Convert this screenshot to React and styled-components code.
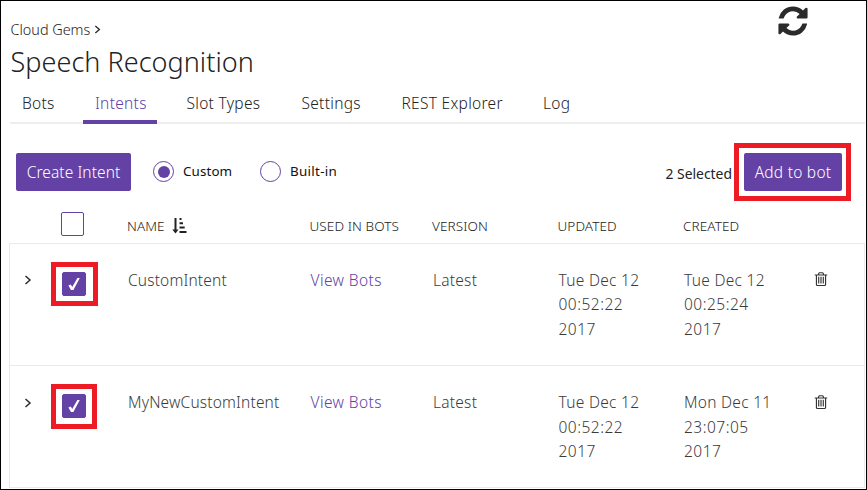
import React from 'react';
import styled, { createGlobalStyle } from 'styled-components';

const PURPLE = '#6441a5';
const RED = '#ed1c24';
const LINE = '#eaeaea';

const Global = createGlobalStyle`
  * { box-sizing: border-box; }
  body { margin: 0; background: #fff; overflow: hidden; }
  button { font: inherit; margin: 0; padding: 0; border: 0; }
  svg { display: block; }
`;

const Page = styled.div`
  display: flex;
  flex-direction: column;
  width: 867px;
  height: 490px;
  padding-left: 8px;
  border: 1px solid #000;
  background: #fff;
  overflow: hidden;
  font-family: 'Noto Sans', 'Open Sans', sans-serif;
  font-weight: 350;
  font-size: 15.5px;
  color: #222;
  white-space: nowrap;
`;

const Header = styled.header`
  display: flex;
  justify-content: space-between;
  height: 83px;
  padding: 0 56.5px 0 1.5px;
`;

const Headings = styled.div`
  padding-top: 19px;
`;

const Breadcrumb = styled.div`
  display: flex;
  align-items: center;
  gap: 4px;
  height: 19px;
  font-size: 14.4px;
`;

const Title = styled.h1`
  margin: 5.5px 0 0;
  font-size: 27px;
  line-height: 34px;
  font-weight: 300;
  letter-spacing: 0.04px;
`;

const RefreshIcon = styled.svg`
  width: 34px;
  height: 34px;
  margin-top: 3px;
  fill: #2b2b2b;
`;

const Tabs = styled.nav`
  display: grid;
  grid-template-columns: 73px 91.5px 115px 100px 141.5px 1fr;
  height: 40px;
  margin: 0 1px 0 1px;
  border-bottom: 2px solid #eee;
`;

const Tab = styled.a`
  justify-self: start;
  height: 40px;
  padding: 0 10.3px 0 12px;
  line-height: 38px;
  letter-spacing: 0.3px;
  color: ${(p) => (p.$active ? PURPLE : '#222')};
  border-bottom: 4px solid ${(p) => (p.$active ? PURPLE : 'transparent')};
`;

const Toolbar = styled.div`
  display: flex;
  align-items: center;
  height: 58px;
  margin-top: 19px;
  padding: 0 15px 0 7px;
`;

const Button = styled.button`
  display: block;
  width: ${(p) => p.$width}px;
  height: 38px;
  padding-top: 1px;
  border-radius: 2px;
  background: ${PURPLE};
  color: #fff;
  letter-spacing: ${(p) => p.$spacing}px;
  line-height: 37px;
`;

const Radio = styled.label`
  display: flex;
  align-items: center;
  gap: 9px;
  width: 107px;
  height: 21px;
  margin-bottom: 1px;
  font-size: 13.4px;
  font-weight: 450;
  line-height: 19px;
  letter-spacing: ${(p) => p.$spacing}px;
  color: #111;
`;

const RadioGroup = styled.div`
  display: flex;
  margin-left: 22px;
`;

const RadioMark = styled.span`
  display: grid;
  place-items: center;
  width: 21px;
  height: 21px;
  border: 1px solid ${PURPLE};
  border-radius: 50%;
  &::after {
    content: '';
    width: 12px;
    height: 12px;
    border-radius: 50%;
    background: ${(p) => (p.$on ? PURPLE : 'transparent')};
  }
`;

const Selected = styled.span`
  margin: 2px 2px 0 auto;
  font-size: 13.9px;
  line-height: 19px;
  font-weight: 400;
`;

const Highlight = styled.div`
  padding: 5px 4px 5px 5px;
  border: 5px solid ${RED};
`;

const columns = '41px 77px 182.5px 122.5px 125.5px 125.5px 127px 1fr';

const HeadRow = styled.div`
  display: grid;
  grid-template-columns: ${columns};
  height: 42px;
  padding-top: 11px;
  font-size: 13.5px;
  line-height: 28px;
  letter-spacing: 0.1px;
`;

const HeadCell = styled.div`
  display: flex;
  align-items: flex-start;
  gap: 7px;
`;

const SortIcon = styled.svg`
  width: 15px;
  height: 16px;
  margin-top: 6px;
  fill: #222;
`;

const Checkbox = styled.span`
  display: grid;
  place-items: center;
  width: ${(p) => (p.$checked ? 24 : 23)}px;
  height: 24px;
  margin-left: 11px;
  border: 1px solid ${PURPLE};
  border-radius: 2px;
  background: ${(p) => (p.$checked ? PURPLE : '#fff')};
`;

const Panel = styled.div`
  width: 856px;
  border: 1px solid ${LINE};
`;

const Row = styled.div`
  display: grid;
  grid-template-columns: ${columns};
  height: ${(p) => p.$height}px;
  padding-top: ${(p) => p.$top}px;
  color: #3a3a3a;
  line-height: ${(p) => p.$pitch}px;
  & + & {
    border-top: 1px solid ${LINE};
  }
`;

const Cell = styled.div`
  letter-spacing: ${(p) => p.$spacing || 0.17}px;
`;

const DateLine = styled.div`
  letter-spacing: ${(p) => p.$spacing}px;
`;

const BotsLink = styled.a`
  color: ${PURPLE};
`;

const Expander = styled.div`
  padding: 7.4px 0 0 14.2px;
`;

const CheckFrame = styled.div`
  width: ${(p) => p.$w}px;
  height: ${(p) => p.$h}px;
  margin-top: ${(p) => p.$shift}px;
  padding: 5px 0;
  border: 5px solid ${RED};
  ${Checkbox} { margin-left: 6px; }
`;

const TrashIcon = styled.svg`
  width: 16px;
  height: 16px;
  margin: 3.9px 0 0 2px;
  fill: #333;
  fill-rule: evenodd;
`;

const Chevron = ({ size = 9 }) => (
  <svg width={size * 0.8} height={size} viewBox="0 0 8 10" fill="none" stroke="#2b2b2b" strokeWidth="1.5">
    <path d="M1.5 1 L6 5 L1.5 9" />
  </svg>
);

const Check = () => (
  <svg width="14" height="16" viewBox="0 0 14 16" fill="#fff">
    <path d="M1.4 9.4 L3.8 8.4 L5.2 11 L10.4 2 L12.8 2 L6.4 14 L4 14 Z" />
  </svg>
);

const Trash = () => (
  <TrashIcon viewBox="0 0 1792 1792">
    <path d="M704 1376v-704q0-14-9-23t-23-9h-64q-14 0-23 9t-9 23v704q0 14 9 23t23 9h64q14 0 23-9t9-23zm256 0v-704q0-14-9-23t-23-9h-64q-14 0-23 9t-9 23v704q0 14 9 23t23 9h64q14 0 23-9t9-23zm256 0v-704q0-14-9-23t-23-9h-64q-14 0-23 9t-9 23v704q0 14 9 23t23 9h64q14 0 23-9t9-23zM1344 1484v-972h-896v972q0 22 7 40.5t14.5 27 10.5 8.5h832q3 0 10.5-8.5t14.5-27 7-40.5zM672 384h448l-48-117q-7-9-17-11h-317q-10 2-17 11zm928 32v64q0 14-9 23t-23 9h-96v972q0 83-47 143.5t-113 60.5h-832q-66 0-113-58.5t-47-141.5v-976h-96q-14 0-23-9t-9-23v-64q0-14 9-23t23-9h309l70-167q15-37 54-63t79-26h320q40 0 79 26t54 63l70 167h309q14 0 23 9t9 23z" />
  </TrashIcon>
);

const tabs = ['Bots', 'Intents', 'Slot Types', 'Settings', 'REST Explorer', 'Log'];

const intents = [
  {
    name: 'CustomIntent',
    updated: ['Tue Dec 12', '00:52:22', '2017'],
    created: ['Tue Dec 12', '00:25:24', '2017'],
    row: { $height: 121, $top: 23.5, $pitch: 24.6 },
    frame: { $w: 47, $h: 44, $shift: -5.5 },
  },
  {
    name: 'MyNewCustomIntent',
    updated: ['Tue Dec 12', '00:52:22', '2017'],
    created: ['Mon Dec 11', '23:07:05', '2017'],
    row: { $height: 122, $top: 24.2, $pitch: 24.5 },
    frame: { $w: 46, $h: 45, $shift: -6.2 },
  },
];

const DateCell = ({ lines }) => (
  <Cell>
    {lines.map((line, i) => (
      <DateLine key={line} $spacing={i === 0 ? 0.28 : 0.5}>{line}</DateLine>
    ))}
  </Cell>
);

export default function App() {
  return (
    <Page>
      <Global />
      <Header>
        <Headings>
          <Breadcrumb>Cloud Gems <Chevron size={9} /></Breadcrumb>
          <Title>Speech Recognition</Title>
        </Headings>
        <RefreshIcon viewBox="0 0 1792 1792">
          <path d="M1639 1056q0 5-1 7-64 268-268 434.5t-478 166.5q-146 0-282.5-55t-243.5-157l-129 129q-19 19-45 19t-45-19-19-45v-448q0-26 19-45t45-19h448q26 0 45 19t19 45-19 45l-137 137q71 66 161 102t187 36q134 0 250-65t186-179q11-17 53-117 8-23 30-23h192q13 0 22.5 9.5t9.5 22.5zm25-800v448q0 26-19 45t-45 19h-448q-26 0-45-19t-19-45 19-45l138-138q-148-137-349-137-134 0-250 65t-186 179q-11 17-53 117-8 23-30 23h-199q-13 0-22.5-9.5t-9.5-22.5v-7q65-268 270-434.5t480-166.5q146 0 284 55.5t245 156.5l130-129q19-19 45-19t45 19 19 45z" />
        </RefreshIcon>
      </Header>
      <Tabs>
        {tabs.map((t) => <Tab key={t} $active={t === 'Intents'}>{t}</Tab>)}
      </Tabs>
      <Toolbar>
        <Button $width={115} $spacing={0.08}>Create Intent</Button>
        <RadioGroup>
          <Radio $spacing={0.1}><RadioMark $on />Custom</Radio>
          <Radio $spacing={0.3}><RadioMark />Built-in</Radio>
        </RadioGroup>
        <Selected>2 Selected</Selected>
        <Highlight><Button $width={98} $spacing={0.25}>Add to bot</Button></Highlight>
      </Toolbar>
      <HeadRow>
        <span />
        <Checkbox />
        <HeadCell>
          NAME
          <SortIcon viewBox="0 0 15 16">
            <path d="M2.5 0h2v11.5h2L3.5 15.5 0.3 11.5h2.2z" />
            <path d="M7.5 0h2v2h-2zM7.5 4.3h3.5v2h-3.5zM7.5 8.6h5.2v2h-5.2zM7.5 13h7v2h-7z" />
          </SortIcon>
        </HeadCell>
        <HeadCell>USED IN BOTS</HeadCell>
        <HeadCell>VERSION</HeadCell>
        <HeadCell>UPDATED</HeadCell>
        <HeadCell>CREATED</HeadCell>
      </HeadRow>
      <Panel>
        {intents.map((it) => (
          <Row key={it.name} {...it.row}>
            <Expander><Chevron size={10} /></Expander>
            <CheckFrame {...it.frame}>
              <Checkbox $checked><Check /></Checkbox>
            </CheckFrame>
            <Cell>{it.name}</Cell>
            <Cell $spacing={0.4}><BotsLink>View Bots</BotsLink></Cell>
            <Cell $spacing={0.25}>Latest</Cell>
            <DateCell lines={it.updated} />
            <DateCell lines={it.created} />
            <Trash />
          </Row>
        ))}
      </Panel>
    </Page>
  );
}
